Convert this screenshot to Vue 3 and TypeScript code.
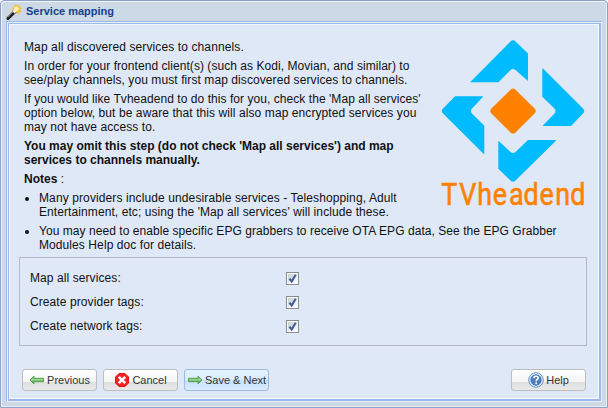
<script setup lang="ts">
import { ref } from 'vue'

interface Option {
  label: string
  checked: boolean
}

const options = ref<Option[]>([
  { label: 'Map all services:', checked: true },
  { label: 'Create provider tags:', checked: true },
  { label: 'Create network tags:', checked: true },
])
</script>

<template>
  <div class="window">
    <header class="titlebar">
      <svg class="wand" width="16" height="16" viewBox="0 0 16 16">
        <path d="M10.3 .3l.9 1.9L13.4 1l-.3 2.3 2.4.6-1.7 1.7 1.4 2.1-2.5 0-.1 2.3-2-1.3-1.5 1.5-.8-2.3-2.5-.4 1.5-2-1-2 2.4-.3.3-2.4 1.8 1.1z" fill="#f9c52c" stroke="#efb52a" stroke-width=".4" />
        <circle cx="10.3" cy="5" r="2.4" fill="#fff2a3" />
        <path d="M2 14.3L7.4 9" stroke="#222" stroke-width="3.2" stroke-linecap="round" />
        <path d="M1.8 13.2L7 8" stroke="#8a8a8a" stroke-width=".9" />
        <path d="M7.7 8.7L9.4 7" stroke="#fff" stroke-width="2.6" />
        <path d="M8.8 9.6L10.3 8" stroke="#444" stroke-width=".9" />
      </svg>
      <h1>Service mapping</h1>
    </header>

    <main class="body">
      <section class="intro">
        <div class="copy">
          <p class="wide">Map all discovered services to channels.</p>
          <p><span class="narrow">In order for your frontend client(s) (such as Kodi, Movian, and similar) to</span><br>see/play channels, you must first map discovered services to channels.</p>
          <p><span class="narrow">If you would like Tvheadend to do this for you, check the 'Map all services'</span><br>option below, but be aware that this will also map encrypted services you<br>may not have access to.</p>
          <p><strong>You may omit this step (do not check 'Map all services') and map<br>services to channels manually.</strong></p>
          <p><strong>Notes</strong> :</p>
        </div>
        <svg class="logo" width="144" height="168" viewBox="441 39 144 168">
          <g fill="#00bcff">
            <path d="M470.3 82L510.5 41.5Q513 39 515.5 41.5L528 53.5V81L515.5 70Q513 68 510.5 70L498.5 82.3H471Q470 82.3 470.3 82Z" />
            <path d="M542.3 68.5L543 68.5L583 108.5Q585.5 111 583 113.5L571 126H543.3Q542.5 126 543 125.3L554.5 113.5Q556.5 111 554.5 108.5L542.3 96.7Z" />
            <path d="M455 96.3H482.5Q483.5 96.3 482.8 97L472 108.5Q469.7 111 472 113.5L484.3 125.7V154L483.5 153.7L443 113.5Q440.5 111 443 108.5Z" />
            <path d="M498.3 141.5L499 141.2L510.5 152Q513 154 515.5 152L528 140H555.5Q556.5 140 555.7 141L515.5 180.5Q513 183 510.5 180.5L498.3 168.7Z" />
          </g>
          <path d="M510.5 89.7Q513 87.3 515.5 89.7L534.6 108.5Q537 111 534.6 113.5L515.5 132.4Q513 134.8 510.5 132.4L491.4 113.5Q489 111 491.4 108.5Z" fill="#ff8100" />
          <text class="wordmark" transform="translate(441.3 204.6) scale(.84 1)" x="0 21.3 42.9 61.4 80.7 97.8 116.9 135.6 153.6">TVheadend</text>
        </svg>
      </section>

      <ul class="notes">
        <li><span class="wide">Many providers include undesirable services - Teleshopping, Adult</span><br>Entertainment, etc; using the 'Map all services' will include these.</li>
        <li><span class="narrow">You may need to enable specific EPG grabbers to receive OTA EPG data, See the EPG Grabber</span><br>Modules Help doc for details.</li>
      </ul>

      <div class="fields">
        <label v-for="option in options" :key="option.label" class="field">
          <span class="caption">{{ option.label }}</span>
          <input v-model="option.checked" type="checkbox">
          <span class="box">
            <svg v-if="option.checked" width="9" height="9" viewBox="0 0 9 9">
              <path d="M1.4 4.6L3.7 7.4L7.7 .8" fill="none" stroke="#3d5e9f" stroke-width="2.1" />
            </svg>
          </span>
        </label>
      </div>

      <footer class="toolbar">
        <button type="button" class="button previous">
          <svg width="16" height="16" viewBox="0 0 16 16">
            <defs>
              <linearGradient id="arrow-fill" x1="0" x2="0" y1="0" y2="1">
                <stop offset="0" stop-color="#6bb267" />
                <stop offset=".45" stop-color="#9bd490" />
                <stop offset="1" stop-color="#2f8a2e" />
              </linearGradient>
            </defs>
            <path d="M1 8L5 4.2V6.3H14.5V9.7H5V11.8Z" fill="url(#arrow-fill)" stroke="#469a42" stroke-width=".9" />
          </svg>
          <span>Previous</span>
        </button>
        <button type="button" class="button cancel">
          <svg width="16" height="16" viewBox="0 0 16 16">
            <path d="M5 1.5H11L14.5 5V11L11 14.5H5L1.5 11V5Z" fill="#f52222" stroke="#e41212" />
            <path d="M4.8 4.8l6.4 6.4M11.2 4.8l-6.4 6.4" stroke="#fff" stroke-width="2.6" />
          </svg>
          <span>Cancel</span>
        </button>
        <button type="button" class="button next">
          <svg width="16" height="16" viewBox="0 0 16 16">
            <path d="M15 8L11 4.2V6.3H1.5V9.7H11V11.8Z" fill="url(#arrow-fill)" stroke="#469a42" stroke-width=".9" />
          </svg>
          <span>Save &amp; Next</span>
        </button>
        <button type="button" class="button help">
          <svg width="16" height="16" viewBox="0 0 16 16">
            <circle cx="8" cy="8" r="7.3" fill="#e3eef9" stroke="#6793c6" stroke-width="1" />
            <circle cx="8" cy="8" r="5.7" fill="#4c7ebb" />
            <path d="M5.8 6.2Q5.9 4.3 8.1 4.3Q10.3 4.3 10.2 6.1Q10.1 7.2 8.8 7.8Q8.2 8.2 8.2 9.3" fill="none" stroke="#fff" stroke-width="1.5" />
            <circle cx="8.2" cy="11.3" r=".95" fill="#fff" />
          </svg>
          <span>Help</span>
        </button>
      </footer>
    </main>
  </div>
</template>

<style>
body {
  margin: 0;
}
</style>

<style scoped>
* {
  box-sizing: border-box;
}
.window {
  width: 608px;
  height: 408px;
  padding: 0 5px 5px;
  display: flex;
  flex-direction: column;
  border: 1px solid #8ba1c5;
  border-radius: 4px 4px 0 0;
  background: #ced9e7;
  box-shadow: inset 1px 1px #f0f4fa, inset -1px -1px #e7eef8;
  font: 12px/14px "Liberation Sans", Arial, sans-serif;
  color: #111;
}
.titlebar {
  height: 20px;
  flex: none;
  display: flex;
  align-items: center;
}
.wand {
  margin-top: 2px;
}
h1 {
  margin: 0 0 0 4px;
  font-size: 11px;
  line-height: 14px;
  color: #15428b;
}
.body {
  flex: 1;
  min-height: 0;
  padding: 15px 13px 10px 11px;
  display: flex;
  flex-direction: column;
  border: 1px solid;
  border-color: #99b9e8 #e9f1fc #e9f1fc #99b9e8;
  background: #dfe8f6;
  box-shadow: inset 1px 1px #e9f1fc, inset -2px -2px #9bb8e8, inset 2px 2px #9bb8e8,
    inset -3px -3px #f7faff, inset 3px 3px #f3f7fc;
}
.intro {
  display: flex;
  justify-content: space-between;
  height: 151px;
  padding-left: 6px;
}
.copy {
  padding-top: 3px;
  white-space: nowrap;
}
p,
li,
.caption {
  letter-spacing: 0.085px;
}
.wide {
  letter-spacing: 0.11px;
}
.narrow {
  letter-spacing: 0.053px;
}
strong {
  letter-spacing: 0;
}
p {
  margin: 0 0 5px;
}
.logo {
  flex: none;
  margin: 2px 3px 0 0;
  overflow: visible;
}
.wordmark {
  font: 400 32px Roboto, sans-serif;
  fill: #ff8100;
  stroke: #ff8100;
  stroke-width: 0.6px;
}
.notes {
  margin: 3px 0 5px;
  padding-left: 21px;
  white-space: nowrap;
}
li + li {
  margin-top: 5px;
}
.fields {
  height: 89px;
  margin: 0 1px;
  padding: 8px 10px;
  border: 1px solid #b5b8c8;
}
.field {
  height: 24px;
  display: flex;
  align-items: center;
}
.caption {
  width: 256px;
}
.field input {
  appearance: none;
  width: 0;
  height: 0;
  margin: 0;
}
.box {
  width: 13px;
  height: 13px;
  padding: 1px;
  border: 1px solid #8a8e90;
  background: linear-gradient(135deg, #c7ced4, #fff) content-box, #f8f8f8;
}
.box svg {
  display: block;
}
.toolbar {
  display: flex;
  gap: 6px;
  margin: auto 2px 0 4px;
}
.button {
  width: 75px;
  height: 22px;
  padding: 0;
  display: flex;
  align-items: center;
  justify-content: center;
  gap: 2px;
  border: 1px solid #bdbdbd;
  border-radius: 3px;
  background: linear-gradient(#fff, #f4f4f4 58%, #dedede 62%, #eaeaea);
  color: #333;
  font: 11px/14px "Liberation Sans", Arial, sans-serif;
  white-space: nowrap;
}
.next {
  width: 85px;
  border-color: #9ebae1;
  background: linear-gradient(#e4f2ff, #d9ecff 48%, #c7e1fd 52%, #d9ebff);
}
.help {
  margin-left: auto;
}
</style>
